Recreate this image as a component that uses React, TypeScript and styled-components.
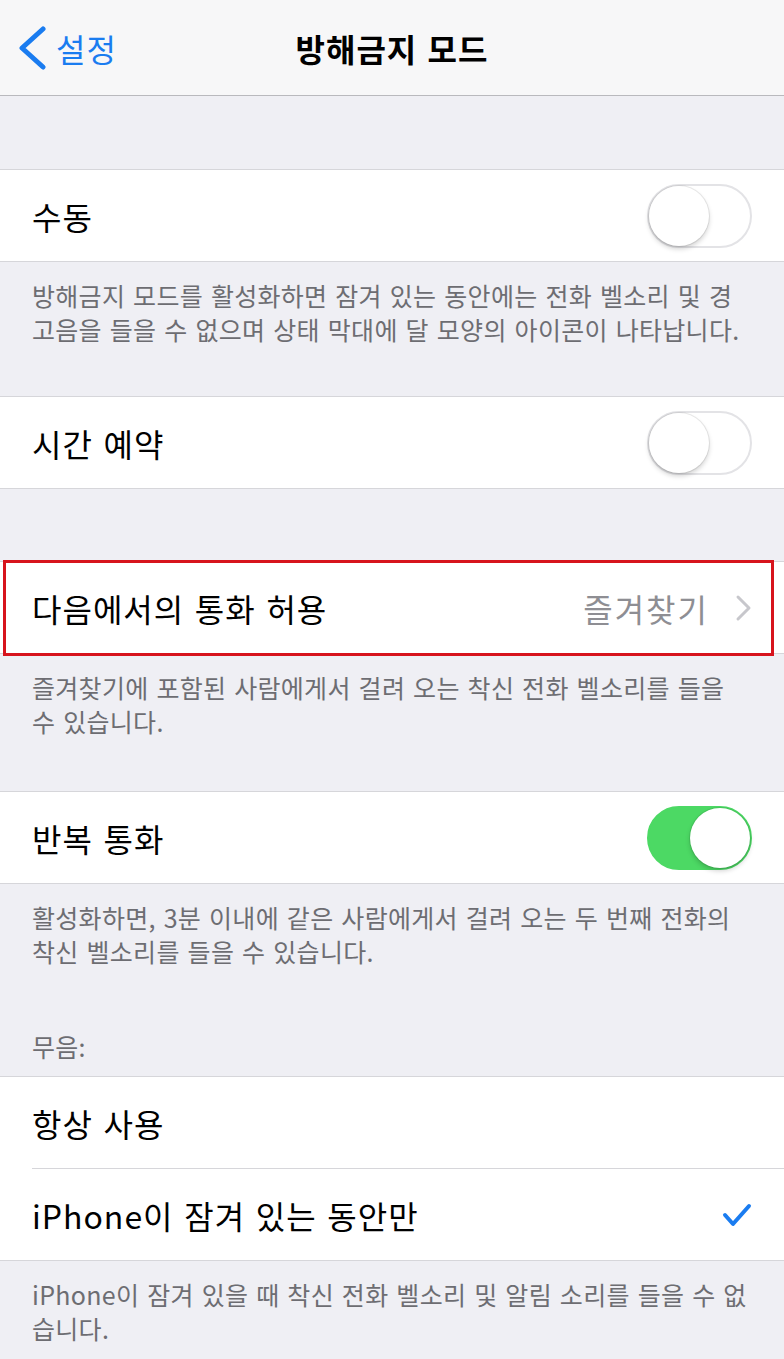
import React from "react";
import styled, { createGlobalStyle } from "styled-components";

const Global = createGlobalStyle`
  html, body { margin: 0; padding: 0; overflow: hidden; background: #efeff4; }
  body { font-family: "Noto Sans CJK KR", "Noto Sans", sans-serif; -webkit-font-smoothing: antialiased; }
  * { box-sizing: border-box; }
`;

const Page = styled.div`
  width: 784px;
  min-height: 1359px;
  background: #efeff4;
  display: flex;
  flex-direction: column;
`;

const NavBar = styled.header`
  height: 96px;
  background: #f7f7f8;
  border-bottom: 1px solid #b9b9bd;
  display: grid;
  grid-template-columns: 1fr auto 1fr;
  align-items: center;
  padding: 0 18px;
`;

const Back = styled.div`
  display: flex;
  align-items: center;
  gap: 10px;
  color: #1a7cf0;
  font-size: 32px;
  letter-spacing: 1px;
  line-height: 1;
`;

const Title = styled.h1`
  margin: 0;
  font-size: 32px;
  font-weight: 600;
  color: #000;
  letter-spacing: 1px;
  word-spacing: 2px;
`;

const Gap = styled.div<{ $h: number }>`
  height: ${(p) => p.$h}px;
`;

const Section = styled.section`
  background: #fff;
  border-top: 1px solid #d6d6da;
  border-bottom: 1px solid #d6d6da;
  display: flex;
  flex-direction: column;
`;

const Row = styled.div<{ $divider?: boolean }>`
  position: relative;
  height: 91px;
  display: flex;
  align-items: center;
  padding: 0 32px;
  ${(p) =>
    p.$divider
      ? `&::after { content: ""; position: absolute; left: 32px; right: 0; bottom: 0; height: 1px; background: #d6d6da; }
         height: 92px;`
      : ""}
`;

const Label = styled.span`
  flex: 1;
  font-size: 32px;
  color: #000;
  letter-spacing: 1px;
  word-spacing: 2.5px;
`;

const Detail = styled.span`
  font-size: 32px;
  color: #8e8e93;
  margin-right: 26px;
  letter-spacing: 2px;
`;

const Highlight = styled.div`
  position: absolute;
  top: -2px;
  bottom: -3px;
  left: 3px;
  right: 10px;
  border: 3px solid #d7141d;
  pointer-events: none;
`;

const SwitchTrack = styled.div<{ $on?: boolean }>`
  position: relative;
  width: 105px;
  height: 64px;
  border-radius: 32px;
  background: ${(p) => (p.$on ? "#4cd964" : "#fff")};
  border: 2px solid ${(p) => (p.$on ? "#4cd964" : "#e3e3e6")};
`;

const Knob = styled.div<{ $on?: boolean }>`
  position: absolute;
  top: 0;
  ${(p) => (p.$on ? "right: 0;" : "left: 0;")}
  width: 60px;
  height: 60px;
  border-radius: 50%;
  background: #fff;
  box-shadow: 0 3px 5px rgba(0, 0, 0, 0.18), 0 0 0 1px rgba(0, 0, 0, 0.08);
`;

const Footer = styled.div<{ $pb: number }>`
  padding: 16px 32px ${(p) => p.$pb}px;
  font-size: 25px;
  line-height: 34px;
  color: #6d6d72;
  white-space: nowrap;
  letter-spacing: 0.3px;
  word-spacing: 2px;
`;

const Header = styled.div`
  padding: 0 32px 13px;
  font-size: 25px;
  line-height: 34px;
  color: #6d6d72;
  letter-spacing: 0.3px;
`;

const Switch = ({ on }: { on?: boolean }) => (
  <SwitchTrack $on={on}>
    <Knob $on={on} />
  </SwitchTrack>
);

export default function App() {
  return (
    <Page>
      <Global />
      <NavBar>
        <Back>
          <svg width="28" height="44" viewBox="0 0 28 44">
            <path d="M25 3 L4 22 L25 41" fill="none" stroke="#1a7cf0" strokeWidth="5" strokeLinecap="round" strokeLinejoin="round" />
          </svg>
          <span>설정</span>
        </Back>
        <Title>방해금지 모드</Title>
        <div />
      </NavBar>
      <Gap $h={73} />
      <Section>
        <Row>
          <Label>수동</Label>
          <Switch />
        </Row>
      </Section>
      <Footer $pb={50}>
        방해금지 모드를 활성화하면 잠겨 있는 동안에는 전화 벨소리 및 경<br />
        고음을 들을 수 없으며 상태 막대에 달 모양의 아이콘이 나타납니다.
      </Footer>
      <Section>
        <Row>
          <Label>시간 예약</Label>
          <Switch />
        </Row>
      </Section>
      <Gap $h={72} />
      <Section>
        <Row>
          <Label>다음에서의 통화 허용</Label>
          <Detail>즐겨찾기</Detail>
          <svg width="17" height="28" viewBox="0 0 17 28">
            <path d="M3 3 L14 14 L3 25" fill="none" stroke="#c7c7cc" strokeWidth="3" strokeLinecap="round" strokeLinejoin="round" />
          </svg>
          <Highlight />
        </Row>
      </Section>
      <Footer $pb={53}>
        즐겨찾기에 포함된 사람에게서 걸려 오는 착신 전화 벨소리를 들을<br />
        수 있습니다.
      </Footer>
      <Section>
        <Row>
          <Label>반복 통화</Label>
          <Switch on />
        </Row>
      </Section>
      <Footer $pb={61}>
        활성화하면, 3분 이내에 같은 사람에게서 걸려 오는 두 번째 전화의<br />
        착신 벨소리를 들을 수 있습니다.
      </Footer>
      <Header>무음:</Header>
      <Section>
        <Row $divider>
          <Label>항상 사용</Label>
        </Row>
        <Row>
          <Label>iPhone이 잠겨 있는 동안만</Label>
          <svg width="30" height="24" viewBox="0 0 30 24">
            <path d="M3 12 L11 21 L27 3" fill="none" stroke="#1a7cf0" strokeWidth="4" strokeLinecap="round" strokeLinejoin="round" />
          </svg>
        </Row>
      </Section>
      <Footer $pb={40}>
        iPhone이 잠겨 있을 때 착신 전화 벨소리 및 알림 소리를 들을 수 없<br />
        습니다.
      </Footer>
    </Page>
  );
}
